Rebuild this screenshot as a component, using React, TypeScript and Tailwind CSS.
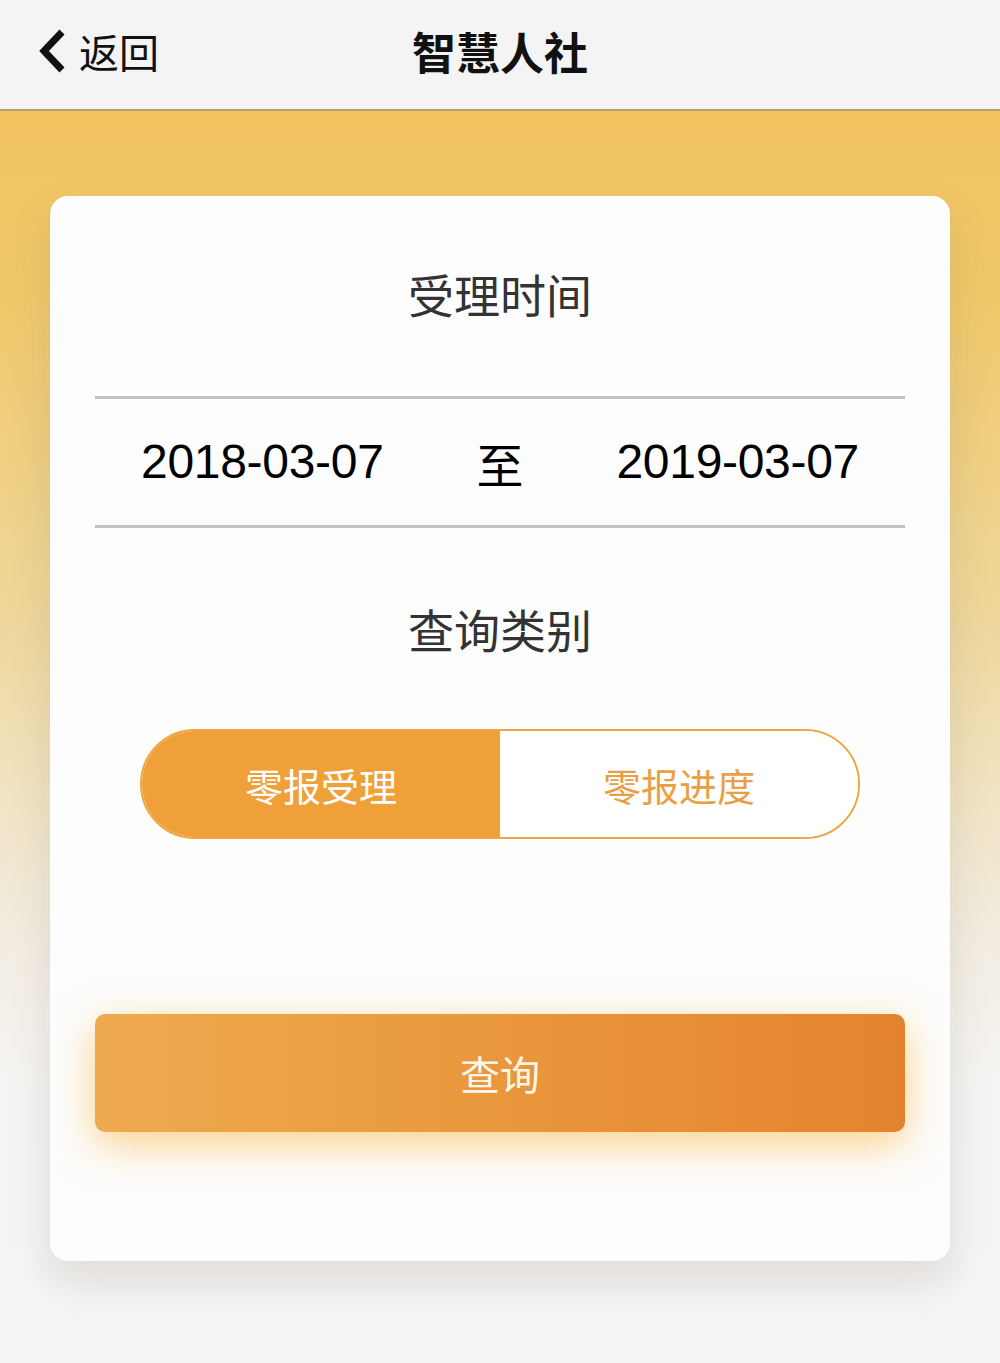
import { useState } from 'react';

const cjk = "font-['Noto_Sans_CJK_SC',sans-serif]";
const latin = "font-['Liberation_Sans','Noto_Sans_CJK_SC',sans-serif]";

export default function App() {
  const [mode, setMode] = useState<'accept' | 'progress'>('accept');

  return (
    <div className={`flex min-h-[1363px] w-[1000px] flex-col ${cjk}`}>
      <header className="flex h-[111px] items-center border-b-2 border-[#b89f6e] bg-[#f4f4f4] px-[37px] pb-[7px]">
        <button className="flex w-[200px] items-center gap-[12px] text-[#111]">
          <svg width="30" height="46" viewBox="0 0 30 46" fill="none">
            <path d="M25 4 L7 23 L25 42" stroke="#111" strokeWidth="7" strokeLinejoin="miter" />
          </svg>
          <span className="text-[40px] leading-none">返回</span>
        </button>
        <h1 className="flex-1 text-center text-[44px] font-bold leading-none text-[#111]">智慧人社</h1>
        <div className="w-[200px]" />
      </header>

      <main className="flex flex-1 flex-col bg-[linear-gradient(180deg,#f1c460_0%,#f0c86a_15%,#efd79a_40%,#f2ecdf_65%,#f5f4f3_78%,#f6f5f4_100%)] px-[50px] pb-[100px] pt-[85px]">
        <section className="flex h-[1065px] flex-col items-center rounded-[18px] bg-[#fdfdfd] px-[45px] shadow-[0_20px_40px_rgba(120,110,100,0.18)]">
          <h2 className="mt-[74px] text-[46px] leading-none text-[#333]">受理时间</h2>

          <div className="mt-[80px] flex h-[132px] w-full items-center border-y-[3px] border-[#c2c2c2] px-[46px] text-[47px] leading-none text-black">
            <span className={`${latin} text-[48px] tracking-[-0.3px]`}>2018-03-07</span>
            <span className="flex-1 text-center">至</span>
            <span className={`${latin} text-[48px] tracking-[-0.3px]`}>2019-03-07</span>
          </div>

          <h2 className="mt-[77px] text-[46px] leading-none text-[#333]">查询类别</h2>

          <div className="mt-[78px] flex h-[110px] w-[720px] overflow-hidden rounded-full border-2 border-[#eda640]">
            <button
              onClick={() => setMode('accept')}
              className={`flex flex-1 items-center justify-center text-[38px] ${mode === 'accept' ? 'bg-[#efa039] text-white' : 'bg-white text-[#e9a043]'}`}
            >
              零报受理
            </button>
            <button
              onClick={() => setMode('progress')}
              className={`flex flex-1 items-center justify-center text-[38px] ${mode === 'progress' ? 'bg-[#efa039] text-white' : 'bg-white text-[#e9a043]'}`}
            >
              零报进度
            </button>
          </div>

          <button className="mt-[175px] flex h-[118px] w-full items-center justify-center rounded-[10px] bg-[linear-gradient(90deg,#eeaa4f,#e9953c_55%,#e4832f)] text-[40px] text-[#fff6e6] shadow-[0_12px_40px_rgba(248,180,60,0.6)]">
            查询
          </button>
        </section>
      </main>
    </div>
  );
}
